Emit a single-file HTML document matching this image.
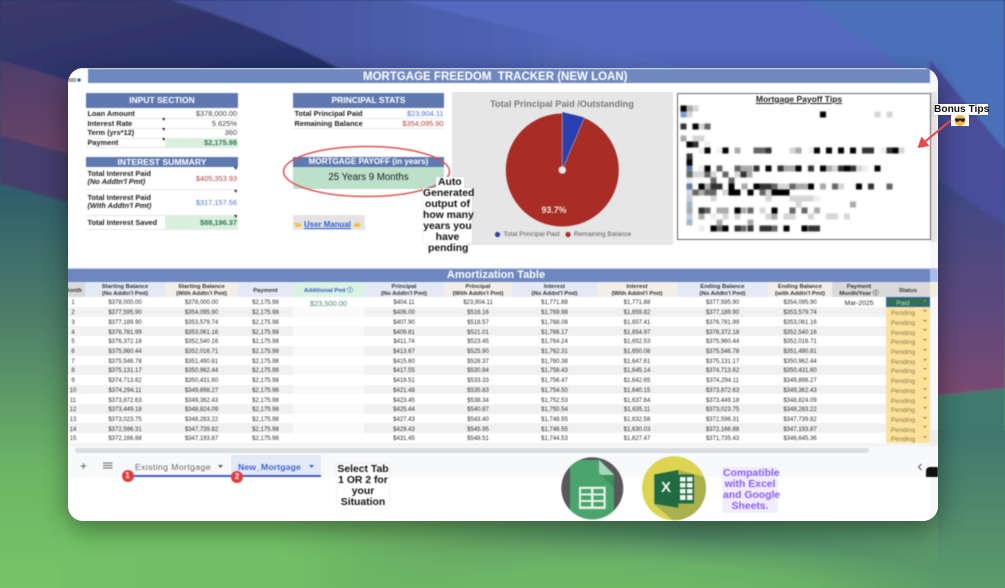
<!DOCTYPE html>
<html><head><meta charset="utf-8"><title>Mortgage Freedom Tracker</title>
<style>
*{box-sizing:border-box;margin:0;padding:0}
html,body{width:1005px;height:588px;overflow:hidden;background:#4a6a8a;font-family:"Liberation Sans",sans-serif}
.bg{position:absolute;left:0;top:0;display:block}
.win{position:absolute;left:67.5px;top:67.5px;width:870px;height:453px;background:#fff;border-radius:15px;box-shadow:0 8px 26px rgba(0,0,0,.42);overflow:hidden}
.c{position:absolute;left:-67.5px;top:-67.5px;width:1005px;height:588px;filter:blur(.4px)}
.a{position:absolute;white-space:nowrap}
.hd{background:#5f79b0;color:#fff;font-weight:bold;text-align:center;font-size:8.5px}
.l{font-size:7.4px;font-weight:bold;color:#222}
.v{font-size:7.4px;color:#444;text-align:right}
.hl{height:.7px;background:#e8e8e8}
.lab{position:absolute;background:#fff;font-weight:bold;color:#111;font-size:10.4px;line-height:11px;text-align:center;box-shadow:0 0 2px rgba(0,0,0,.12);white-space:nowrap}
.r{display:grid;grid-template-columns:18px 80px 73px 55px 71px 80px 68px 85px 80px 91px 64px 54px 44px;height:9.71px;line-height:9.71px;font-size:6px;color:#2c2c2c;text-align:center}
.r>span{white-space:nowrap;overflow:hidden;padding-top:2.2px}
.r:nth-child(even){background:#f1f1f1}
.r>span:first-child{padding-right:6px}
.r>span:nth-child(5){background:#fff}
.r:nth-child(even)>span:nth-child(5){background:#fafafa}
.r>span:nth-child(13){background:#fce19b;color:#8d7c4c;font-size:6.6px;padding-right:10px;position:relative}
.r>span:nth-child(13):after{content:"";position:absolute;right:3px;top:3px;border:2px solid transparent;border-top:2.5px solid #a58a3a;border-bottom:0}
.th{position:absolute;top:281.7px;left:67px;height:15.6px;display:grid;grid-template-columns:18px 80px 73px 55px 71px 80px 68px 85px 80px 91px 64px 54px 44px;font-size:5.9px;font-weight:bold;color:#333;text-align:center;line-height:7.4px}
.th>div{display:flex;align-items:center;justify-content:center;overflow:hidden;white-space:nowrap;background:#e3eaf5;padding-top:3.5px}
.th>div.t{background:#f3efe8}
.th>div.g{background:#d9d9d9}
</style></head><body>
<svg class="bg" width="1005" height="588" viewBox="0 0 1005 588">
<defs>
<linearGradient id="v" x1="0" y1="0" x2="0" y2="1"><stop offset="0" stop-color="#1f3770"/><stop offset=".3" stop-color="#2d5a6c"/><stop offset=".55" stop-color="#4e8069"/><stop offset=".8" stop-color="#6db565"/><stop offset="1" stop-color="#75c566"/></linearGradient>
<linearGradient id="tl" x1="0" y1="0" x2="0" y2="1"><stop offset="0" stop-color="#3b3a6c"/><stop offset="1" stop-color="#6a4468"/></linearGradient>
<linearGradient id="dk" x1="0" y1="0" x2="1" y2="1"><stop offset="0" stop-color="#3e3a6c"/><stop offset="1" stop-color="#20316c"/></linearGradient>
<linearGradient id="tb" x1="0" y1="0" x2="1" y2="0"><stop offset="0" stop-color="#444f94"/><stop offset=".6" stop-color="#4f62b4"/><stop offset="1" stop-color="#5b74c8"/></linearGradient>
<linearGradient id="rr" x1="0" y1="0" x2="0" y2="1"><stop offset="0" stop-color="#3c4986"/><stop offset=".6" stop-color="#5d4a7c"/><stop offset="1" stop-color="#7d4a70"/></linearGradient>
<linearGradient id="gb" gradientUnits="userSpaceOnUse" x1="0" y1="0" x2="938" y2="0"><stop offset="0" stop-color="#72c166"/><stop offset=".3" stop-color="#72c066"/><stop offset=".47" stop-color="#68aa64"/><stop offset=".75" stop-color="#508a66"/><stop offset="1" stop-color="#5a986a"/></linearGradient>
<linearGradient id="gr" x1="0" y1="0" x2="0" y2="1"><stop offset="0" stop-color="#41766e"/><stop offset="1" stop-color="#5c9c6a"/></linearGradient>
<radialGradient id="gl" gradientUnits="userSpaceOnUse" cx="0" cy="0" r="1" gradientTransform="translate(640 600) scale(330 65)"><stop offset="0" stop-color="#72bc66"/><stop offset=".55" stop-color="#72bc66" stop-opacity=".75"/><stop offset="1" stop-color="#72bc66" stop-opacity="0"/></radialGradient>
<filter id="b"><feGaussianBlur stdDeviation="1"/></filter>
</defs>
<rect width="1005" height="588" fill="url(#v)"/>
<g filter="url(#b)">
<polygon points="0,0 400,0 400,70 67,202 0,183" fill="#453c6c"/>
<polygon points="0,0 400,0 400,80 67,153 0,135" fill="url(#tl)"/>
<path d="M0,0 L170,0 Q270,30 345,72 L67,80 L0,60Z" fill="url(#dk)"/>
<path d="M170,0 L700,0 L720,72 L345,72 Q270,30 170,0Z" fill="url(#tb)"/>
<polygon points="400,0 1005,0 1005,235 938,90 700,72" fill="#5469c0"/>
<polygon points="805,0 1005,0 1005,240 938,90" fill="#4b6fba"/>
<polygon points="930,60 1005,150 1005,240 930,170" fill="#4a4e9a"/>
<polygon points="930,175 1005,225 1005,400 930,400" fill="url(#rr)"/>
<path d="M930,396 Q970,392 1005,388 L1005,440 L930,440Z" fill="#3f7a6d"/>
</g>
<rect x="930" y="430" width="75" height="158" fill="url(#gr)"/>
<rect x="60" y="515" width="878" height="73" fill="url(#gb)"/>
<rect x="300" y="530" width="638" height="58" fill="url(#gl)"/>
</svg>
<div class="win"><div class="c">
<!-- title -->
<div class="a" style="left:67px;top:67px;width:871px;height:2px;background:#ddd"></div>
<div class="a" style="left:87.5px;top:69.3px;width:842.5px;height:14px;background:#7088c0;color:#fff;font-weight:bold;font-size:11.5px;line-height:14px;text-align:center;padding-right:27px;padding-top:1.2px">MORTGAGE FREEDOM&nbsp; TRACKER (NEW LOAN)</div>
<svg class="a" style="left:68px;top:77px" width="16" height="7"><g fill="#555"><rect x="0" y="1.5" width="8" height="1"/><rect x="0" y="3.5" width="8" height="1"/></g><circle cx="11" cy="3" r="1.8" fill="#2a6a9a"/></svg>
<!-- right gutter -->
<div class="a" style="left:930px;top:69px;width:8px;height:452px;background:#f8f8f8"></div>
<div class="a" style="left:931px;top:92px;width:6px;height:150px;background:#e4e4e4"></div>
<div class="a" style="left:930px;top:268px;width:8px;height:14px;background:#a9bce6"></div>
<div class="a" style="left:930px;top:282px;width:8px;height:15px;background:#f0ece0"></div>
<div class="a" style="left:930px;top:430px;width:8px;height:18px;background:#ececec"></div>
<!-- input -->
<div class="a hd" style="left:85.7px;top:93.3px;width:152.6px;height:15px;line-height:15px">INPUT SECTION</div>
<div class="a" style="left:165px;top:137.8px;width:73.3px;height:9.7px;background:#d9f0df"></div>
<div class="a l" style="left:87.5px;top:109px;line-height:9.7px">Loan Amount</div>
<div class="a v" style="left:165px;top:109px;width:72px;line-height:9.7px">$378,000.00</div>
<div class="a l" style="left:87.5px;top:118.5px;line-height:9.7px">Interest Rate</div>
<div class="a v" style="left:165px;top:118.5px;width:72px;line-height:9.7px">5.625%</div>
<div class="a l" style="left:87.5px;top:128.2px;line-height:9.7px">Term (yrs*12)</div>
<div class="a v" style="left:165px;top:128.2px;width:72px;line-height:9.7px">360</div>
<div class="a l" style="left:87.5px;top:137.9px;line-height:9.7px">Payment</div>
<div class="a v" style="left:165px;top:137.9px;width:72px;line-height:9.7px;color:#2f7a4e;font-weight:bold">$2,175.98</div>
<div class="a hl" style="left:85.7px;top:118px;width:152.6px"></div><div class="a hl" style="left:85.7px;top:127.8px;width:152.6px"></div><div class="a hl" style="left:85.7px;top:137.5px;width:152.6px"></div><div class="a hl" style="left:85.7px;top:147px;width:152.6px"></div>
<svg class="a" style="left:160px;top:117px" width="6" height="30"><path d="M2,1h3l-1,3zM2,11h3l-1,3zM2,21h3l-1,3z" fill="#222"/></svg>
<!-- interest summary -->
<div class="a hd" style="left:85.7px;top:156.7px;width:152.6px;height:10.7px;line-height:10.7px;font-size:8.6px">INTEREST SUMMARY</div>
<div class="a" style="left:165px;top:215px;width:73.3px;height:14.3px;background:#d9f0df"></div>
<div class="a l" style="left:87.5px;top:169.5px;line-height:8.8px">Total Interest Paid<br><i>(No Addtn'l Pmt)</i></div>
<div class="a v" style="left:165px;top:174px;width:72px;color:#b8403a">$405,353.93</div>
<div class="a l" style="left:87.5px;top:193.5px;line-height:8.8px">Total Interest Paid<br><i>(With Addtn'l Pmt)</i></div>
<div class="a v" style="left:165px;top:198px;width:72px;color:#4a72d8">$317,157.56</div>
<div class="a l" style="left:87.5px;top:218px">Total Interest Saved</div>
<div class="a v" style="left:165px;top:218px;width:72px;color:#2f7a4e;font-weight:bold">$88,196.37</div>
<div class="a hl" style="left:85.7px;top:189.3px;width:152.6px"></div><div class="a hl" style="left:85.7px;top:214.6px;width:152.6px"></div><div class="a hl" style="left:85.7px;top:229.3px;width:152.6px"></div>
<svg class="a" style="left:233px;top:166px" width="6" height="62"><path d="M1,1h3l-1,3zM1,24h3l-1,3zM1,49h3l-1,3z" fill="#222"/></svg>
<!-- principal -->
<div class="a hd" style="left:292.7px;top:93.3px;width:151.6px;height:15px;line-height:15px">PRINCIPAL STATS</div>
<div class="a l" style="left:294.5px;top:109px;line-height:9.7px">Total Principal Paid</div>
<div class="a v" style="left:370px;top:109px;width:73.5px;line-height:9.7px;color:#4a72d8">$23,904.11</div>
<div class="a l" style="left:294.5px;top:118.5px;line-height:9.7px">Remaining Balance</div>
<div class="a v" style="left:370px;top:118.5px;width:73.5px;line-height:9.7px;color:#b8403a">$354,095.90</div>
<div class="a hl" style="left:292.7px;top:118px;width:151.6px"></div><div class="a hl" style="left:292.7px;top:127.8px;width:151.6px"></div>
<!-- payoff -->
<div class="a hd" style="left:292.7px;top:156.7px;width:151.6px;height:10.7px;line-height:10.7px;font-size:8.1px">MORTGAGE PAYOFF (in years)</div>
<div class="a" style="left:292.7px;top:167.4px;width:151.6px;height:22px;background:#bce0ca;color:#222;font-size:9.7px;line-height:22px;text-align:center">25 Years 9 Months</div>
<!-- manual -->
<div class="a" style="left:292.7px;top:215px;width:72px;height:15px;background:#e4e4e4"></div>
<div class="a" style="left:304px;top:220px;font-size:7.9px;font-weight:bold;color:#2a5bd7;text-decoration:underline">User Manual</div>
<svg class="a" style="left:293px;top:220px" width="70" height="9"><path d="M1,3h5l2,1v3H3zM68,3h-5l-2,1v3h5z" fill="#f2c33c"/></svg>
<!-- chart -->
<div class="a" style="left:451.5px;top:92px;width:221px;height:153px;background:#e6e6e6"></div>
<div class="a" style="left:451.5px;top:97.5px;width:221px;text-align:center;font-size:9.2px;line-height:12px;font-weight:bold;color:#7a7a7a">Total Principal Paid /Outstanding</div>
<svg class="a" style="left:451.5px;top:92px" width="221" height="153" viewBox="451.5 92 221 153">
<circle cx="561.8" cy="170" r="56.5" fill="#a92c25"/>
<path d="M561.8,170 L561.8,112 L583.8,117.6Z" fill="#2a3fb0"/>
<path d="M561.8,170 L561.8,113.5M561.8,170 L583.8,118" stroke="#d8d8d8" stroke-width=".5" fill="none"/>
<circle cx="561.8" cy="170" r="3.8" fill="#e6e6e6"/>
<circle cx="497" cy="234.5" r="2.6" fill="#2a3fb0"/><circle cx="567.5" cy="234.5" r="2.6" fill="#a92c25"/>
</svg>
<div class="a" style="left:540px;top:204.5px;width:28px;text-align:center;color:#f4e3e0;font-size:8.8px;line-height:10px;font-weight:bold">93.7%</div>
<div class="a" style="left:503.5px;top:230.5px;font-size:6.6px;line-height:8px;color:#5a5a5a">Total Principal Paid</div>
<div class="a" style="left:574px;top:230.5px;font-size:6.6px;line-height:8px;color:#5a5a5a">Remaining Balance</div>
<!-- tips -->
<div class="a" style="left:676.5px;top:92.5px;width:254px;height:147px;background:#fff;border:1px solid #666"></div>
<div class="a" style="left:672px;top:94px;width:254px;text-align:center;font-size:8.5px;line-height:10px;font-weight:bold;color:#222;text-decoration:underline">Mortgage Payoff Tips</div>
<svg class="a" style="left:670px;top:90px;filter:blur(.5px)" width="265" height="155" viewBox="0 0 795 465" shape-rendering="crispEdges">
<g>
<path fill="#000" d="M32 46h18v18h-18zM450 64h18v18h-18zM68 101h18v18h-18zM50 155h18v18h-18zM104 173h18v18h-18zM158 173h18v18h-18zM432 173h18v18h-18zM468 173h18v18h-18zM504 173h18v18h-18zM540 173h18v18h-18zM668 173h18v18h-18zM50 209h18v18h-18zM104 227h18v18h-18zM286 227h18v18h-18zM376 227h18v18h-18zM450 227h18v18h-18zM522 227h18v18h-18zM614 227h18v18h-18zM86 281h18v18h-18zM140 281h18v18h-18zM176 281h18v18h-18zM250 281h18v18h-18zM414 281h18v18h-18zM558 281h18v18h-18zM176 299h36v18h-36zM232 299h18v18h-18zM304 299h54v18h-54zM194 353h18v18h-18zM304 353h18v18h-18zM122 407h18v18h-18zM158 407h18v18h-18zM340 407h18v18h-18zM394 407h18v18h-18z"/>
<path fill="#333" d="M32 101h18v18h-18zM68 155h18v18h-18zM286 173h18v18h-18zM576 173h36v18h-36zM650 173h18v18h-18zM50 191h18v18h-18zM250 227h18v18h-18zM322 227h18v18h-18zM414 227h18v18h-18zM504 227h18v18h-18zM540 227h18v18h-18zM212 245h18v18h-18zM122 281h36v18h-36zM268 281h36v18h-36zM594 281h18v18h-18zM86 353h18v18h-18zM194 407h18v18h-18zM232 407h18v18h-18zM268 407h36v18h-36zM414 407h36v18h-36z"/>
<path fill="#666" d="M104 101h18v18h-18zM250 173h36v18h-36zM140 227h18v18h-18zM194 227h18v18h-18zM50 245h18v18h-18zM104 245h18v18h-18zM158 245h18v18h-18zM122 263h18v18h-18zM176 263h18v18h-18zM304 281h18v18h-18zM358 281h18v18h-18zM486 281h18v18h-18zM650 281h18v18h-18zM68 299h18v18h-18zM104 299h36v18h-36zM268 299h18v18h-18zM104 353h18v18h-18zM232 353h18v18h-18zM358 353h18v18h-18zM394 353h18v18h-18zM140 407h18v18h-18zM212 407h18v18h-18zM304 407h18v18h-18z"/>
<path fill="#aaa" d="M50 46h18v18h-18zM32 137h18v18h-18zM194 173h18v18h-18zM376 173h18v18h-18zM212 227h36v18h-36zM340 227h36v18h-36zM468 227h18v18h-18zM230 245h18v18h-18zM104 281h18v18h-18zM214 281h18v18h-18zM376 281h36v18h-36zM450 281h18v18h-18zM86 299h18v18h-18zM540 335h18v18h-18zM50 353h18v18h-18zM140 353h36v18h-36zM212 353h18v18h-18zM432 353h18v18h-18zM86 371h18v18h-18zM304 371h18v18h-18zM140 389h18v18h-18zM232 389h18v18h-18z"/>
<path fill="#d6d6d6" d="M68 46h18v18h-18zM50 64h18v18h-18zM614 64h18v18h-18zM650 64h18v18h-18zM86 101h18v18h-18zM68 137h36v18h-36zM358 173h18v18h-18zM686 173h18v18h-18zM486 227h18v18h-18zM558 227h18v18h-18zM68 245h36v18h-36zM122 245h18v18h-18zM194 245h18v18h-18zM322 281h36v18h-36zM504 281h18v18h-18zM50 299h18v18h-18zM158 299h18v18h-18zM286 299h18v18h-18zM122 317h18v18h-18zM286 317h18v18h-18zM358 317h72v18h-72zM376 335h18v18h-18zM268 353h18v18h-18zM414 371h18v18h-18zM468 371h36v18h-36zM522 371h18v18h-18zM158 371h18v18h-18zM194 371h18v18h-18zM286 371h18v18h-18zM340 371h36v18h-36z"/>
<path fill="#efefef" d="M104 155h18v18h-18zM86 173h18v18h-18zM140 173h18v18h-18zM414 173h18v18h-18zM632 173h18v18h-18zM86 227h18v18h-18zM576 227h18v18h-18zM122 371h18v18h-18zM86 407h18v18h-18zM432 317h18v18h-18z"/>
<path fill="#7aa0cc" d="M32 64h18v18h-18z"/>
<path fill="#5f7fa8" d="M50 227h18v18h-18zM50 281h18v18h-18z"/>
<path fill="#bcd0e5" d="M50 317h18v18h-18zM50 371h18v18h-18z"/>
<path fill="#a5b5c8" d="M50 335h18v18h-18zM50 389h18v18h-18z"/>
<path fill="#e5ecf5" d="M50 263h18v18h-18z"/>
</g>
</svg>
<!-- amort -->
<div class="a" style="left:67px;top:267.5px;width:871px;height:1px;background:#c5cee6"></div>
<div class="a" style="left:67px;top:268.5px;width:863px;height:13.2px;background:#6f87c0;color:#fff;font-weight:bold;font-size:11px;line-height:13.2px;text-align:center;padding-top:.8px;padding-right:5px">Amortization Table</div>
<div class="th">
<div class="g" style="justify-content:flex-end;padding-right:3.3px"><span>Month</span></div>
<div>Starting Balance<br>(No Addtn'l Pmt)</div>
<div class="t">Starting Balance<br>(With Addtn'l Pmt)</div>
<div>Payment</div>
<div style="background:#d9f2e2;color:#3358c8">Additional Pmt ⓘ</div>
<div>Principal<br>(No Addtn'l Pmt)</div>
<div class="t">Principal<br>(With Addtn'l Pmt)</div>
<div>Interest<br>(No Addnt'l Pmt)</div>
<div class="t">Interest<br>(With Addnt'l Pmt)</div>
<div>Ending Balance<br>(No Addtn'l Pmt)</div>
<div class="t">Ending Balance<br>(with Addtn'l Pmt)</div>
<div class="g">Payment<br>Month/Year ⓘ</div>
<div class="g">Status</div>
</div>
<div class="a" style="left:67px;top:297.3px;width:863px;white-space:normal">
<div class="r"><span>1</span><span>$378,000.00</span><span>$378,000.00</span><span>$2,175.98</span><span style="color:#3d8a6a;font-size:7.4px">$23,500.00</span><span>$404.11</span><span>$23,904.11</span><span>$1,771.88</span><span>$1,771.88</span><span>$377,595.90</span><span>$354,095.90</span><span style="font-size:6.8px">Mar-2025</span><span style="background:#2f7050;color:#bfe0bf">Paid</span></div>
<div class="r"><span>2</span><span>$377,595.90</span><span>$354,095.90</span><span>$2,175.98</span><span></span><span>$406.00</span><span>$516.16</span><span>$1,769.98</span><span>$1,659.82</span><span>$377,189.90</span><span>$353,579.74</span><span></span><span>Pending</span></div>
<div class="r"><span>3</span><span>$377,189.90</span><span>$353,579.74</span><span>$2,175.98</span><span></span><span>$407.90</span><span>$518.57</span><span>$1,768.08</span><span>$1,657.41</span><span>$376,781.99</span><span>$353,061.16</span><span></span><span>Pending</span></div>
<div class="r"><span>4</span><span>$376,781.99</span><span>$353,061.16</span><span>$2,175.98</span><span></span><span>$409.81</span><span>$521.01</span><span>$1,766.17</span><span>$1,654.97</span><span>$376,372.18</span><span>$352,540.16</span><span></span><span>Pending</span></div>
<div class="r"><span>5</span><span>$376,372.18</span><span>$352,540.16</span><span>$2,175.98</span><span></span><span>$411.74</span><span>$523.45</span><span>$1,764.24</span><span>$1,652.53</span><span>$375,960.44</span><span>$352,016.71</span><span></span><span>Pending</span></div>
<div class="r"><span>6</span><span>$375,960.44</span><span>$352,016.71</span><span>$2,175.98</span><span></span><span>$413.67</span><span>$525.90</span><span>$1,762.31</span><span>$1,650.08</span><span>$375,546.78</span><span>$351,490.81</span><span></span><span>Pending</span></div>
<div class="r"><span>7</span><span>$375,546.78</span><span>$351,490.81</span><span>$2,175.98</span><span></span><span>$415.60</span><span>$528.37</span><span>$1,760.38</span><span>$1,647.61</span><span>$375,131.17</span><span>$350,962.44</span><span></span><span>Pending</span></div>
<div class="r"><span>8</span><span>$375,131.17</span><span>$350,962.44</span><span>$2,175.98</span><span></span><span>$417.55</span><span>$530.84</span><span>$1,758.43</span><span>$1,645.14</span><span>$374,713.62</span><span>$350,431.60</span><span></span><span>Pending</span></div>
<div class="r"><span>9</span><span>$374,713.62</span><span>$350,431.60</span><span>$2,175.98</span><span></span><span>$419.51</span><span>$533.33</span><span>$1,756.47</span><span>$1,642.65</span><span>$374,294.11</span><span>$349,898.27</span><span></span><span>Pending</span></div>
<div class="r"><span>10</span><span>$374,294.11</span><span>$349,898.27</span><span>$2,175.98</span><span></span><span>$421.48</span><span>$535.83</span><span>$1,754.50</span><span>$1,640.15</span><span>$373,872.63</span><span>$349,362.43</span><span></span><span>Pending</span></div>
<div class="r"><span>11</span><span>$373,872.63</span><span>$349,362.43</span><span>$2,175.98</span><span></span><span>$423.45</span><span>$538.34</span><span>$1,752.53</span><span>$1,637.64</span><span>$373,449.18</span><span>$348,824.09</span><span></span><span>Pending</span></div>
<div class="r"><span>12</span><span>$373,449.18</span><span>$348,824.09</span><span>$2,175.98</span><span></span><span>$425.44</span><span>$540.87</span><span>$1,750.54</span><span>$1,635.11</span><span>$373,023.75</span><span>$348,283.22</span><span></span><span>Pending</span></div>
<div class="r"><span>13</span><span>$373,023.75</span><span>$348,283.22</span><span>$2,175.98</span><span></span><span>$427.43</span><span>$543.40</span><span>$1,748.55</span><span>$1,632.58</span><span>$372,596.31</span><span>$347,739.82</span><span></span><span>Pending</span></div>
<div class="r"><span>14</span><span>$372,596.31</span><span>$347,739.82</span><span>$2,175.98</span><span></span><span>$429.43</span><span>$545.95</span><span>$1,746.55</span><span>$1,630.03</span><span>$372,166.88</span><span>$347,193.87</span><span></span><span>Pending</span></div>
<div class="r"><span>15</span><span>$372,166.88</span><span>$347,193.87</span><span>$2,175.98</span><span></span><span>$431.45</span><span>$548.51</span><span>$1,744.53</span><span>$1,627.47</span><span>$371,735.43</span><span>$346,645.36</span><span></span><span>Pending</span></div>
</div>
<div class="a" style="left:885.5px;top:297px;width:44.5px;height:10px;border:1px solid #3a62d0"></div>
<!-- scroll -->
<div class="a" style="left:67px;top:443px;width:863px;height:3px;background:#f3f3f3"></div>
<div class="a" style="left:67px;top:446px;width:871px;height:9px;background:#f8f9fa"></div>
<div class="a" style="left:75px;top:447.5px;width:794px;height:5.5px;border-radius:3px;background:#dadce0"></div>
<!-- tabs -->
<div class="a" style="left:67px;top:455px;width:871px;height:22px;background:#f8f9fa"></div>
<div class="a" style="left:231px;top:455px;width:90px;height:22px;background:#e3e9f7"></div>
<div class="a" style="left:133px;top:475px;width:188px;height:2px;background:#3f5bc4"></div>
<div class="a" style="left:80px;top:459.5px;font-size:12px;line-height:13px;color:#555">+</div>
<svg class="a" style="left:103px;top:462px" width="10" height="8"><path d="M0,1h9.5M0,3.5h9.5M0,6h9.5" stroke="#666" stroke-width="1"/></svg>
<div class="a" style="left:135px;top:461.5px;font-size:8.6px;line-height:11px;letter-spacing:.42px;color:#666">Existing Mortgage</div>
<svg class="a" style="left:218px;top:465px" width="6" height="4"><path d="M0,0h5l-2.5,3z" fill="#555"/></svg>
<div class="a" style="left:238px;top:461.5px;font-size:8.6px;line-height:11px;font-weight:bold;letter-spacing:.15px;color:#3f63d8">New_Mortgage</div>
<svg class="a" style="left:309px;top:465px" width="6" height="4"><path d="M0,0h5l-2.5,3z" fill="#3f63d8"/></svg>
<div class="a" style="left:121.5px;top:469.5px;width:12px;height:12px;border-radius:50%;background:#e23b3b;color:#fff;font-size:8px;font-weight:bold;line-height:12px;text-align:center">1</div>
<div class="a" style="left:231px;top:471px;width:12px;height:12px;border-radius:50%;background:#e23b3b;color:#fff;font-size:8px;font-weight:bold;line-height:12px;text-align:center">2</div>
<svg class="a" style="left:917px;top:463px" width="6" height="8"><path d="M4.5,1L1.5,4L4.5,7" stroke="#555" fill="none"/></svg>
<div class="a" style="left:926px;top:467px;width:12px;height:10px;background:#111;border-radius:4px 0 0 0"></div>
<!-- ellipse (behind the labels) -->
<svg class="a" style="left:0;top:0" width="1005" height="588"><ellipse cx="366.5" cy="171.5" rx="83" ry="25" fill="none" stroke="#e05050" stroke-width="1.5"/></svg>
<!-- labels -->
<div class="lab" style="left:436px;top:177px;padding:0 2px;line-height:11px">Auto</div>
<div class="lab" style="left:423px;top:188px;width:49px">Generated<br>output of<br>how many<br>years you<br>have</div>
<div class="lab" style="left:428px;top:243px;width:39px">pending</div>
<div class="lab" style="left:337px;top:463.5px;width:52px">Select Tab<br>1 OR 2 for<br>your<br>Situation</div>
<div class="lab" style="left:723px;top:467.5px;width:54px;color:#8b5cf6;background:#f2edfb">Compatible<br>with Excel<br>and Google<br>Sheets.</div>
<!-- excel/sheets icons -->
<svg class="a" style="left:0;top:0" width="1005" height="588">
<defs><clipPath id="c1"><circle cx="592.3" cy="488.3" r="31"/></clipPath><clipPath id="c2"><circle cx="674" cy="488.3" r="32"/></clipPath></defs>
<circle cx="592.3" cy="488.3" r="31" fill="#5c575c"/>
<g clip-path="url(#c1)">
<path d="M574,460H600L614,474V525H570V464Q570,460 574,460Z" fill="#4aa56c"/>
<path d="M599,460L614,475H603Q599,475 599,471Z" fill="#a5d6b8"/>
<path d="M601,475L614,488V475Z" fill="#3f8f5d"/>
<rect x="579" y="486.7" width="26.7" height="22.3" fill="#e6f0e6"/>
<g fill="#4aa56c"><rect x="581" y="489" width="10" height="4.5"/><rect x="593.5" y="489" width="10" height="4.5"/><rect x="581" y="495.5" width="10" height="4.5"/><rect x="593.5" y="495.5" width="10" height="4.5"/><rect x="581" y="502" width="10" height="4.5"/><rect x="593.5" y="502" width="10" height="4.5"/></g>
</g>
<circle cx="674" cy="488.3" r="32" fill="#ddd451"/>
<g clip-path="url(#c2)">
<path d="M654,504L684,530L715,510V480L694,474L678,470Z" fill="#a9b04e"/>
<rect x="678" y="474.5" width="16" height="29" fill="#206b42"/>
<g fill="#f2f5ee"><rect x="680" y="477" width="5.5" height="4.5"/><rect x="687" y="477" width="5.5" height="4.5"/><rect x="680" y="483" width="5.5" height="4.5"/><rect x="687" y="483" width="5.5" height="4.5"/><rect x="680" y="489" width="5.5" height="4.5"/><rect x="687" y="489" width="5.5" height="4.5"/><rect x="680" y="495" width="5.5" height="5"/><rect x="687" y="495" width="5.5" height="5"/></g>
<path d="M654.3,474.5L678.3,470V507.7L654.3,503.7Z" fill="#206b42"/>
</g>
</svg>
<div class="a" style="left:659px;top:480px;width:14px;text-align:center;color:#f3f5ee;font-size:15px;line-height:16px;font-weight:bold">X</div>
</div></div>
<!-- parts overlapping the window edge -->
<div class="a" style="left:934px;top:104px;width:54px;background:#fff;font-weight:bold;color:#111;font-size:10.2px;line-height:11px;text-align:center;box-shadow:0 0 3px rgba(0,0,0,.2);filter:blur(.3px)">Bonus Tips</div>
<svg class="a" style="left:910px;top:100px;filter:blur(.3px)" width="70" height="55" viewBox="910 100 70 55">
<rect x="951" y="115" width="18" height="11" fill="#fff"/>
<circle cx="960" cy="120.5" r="5.5" fill="#f3b640"/>
<path d="M955,118.5h10v1.5l-1,1.7h-2.5l-1.5,-1.7l-1.5,1.7h-2.5l-1,-1.7z" fill="#222"/>
<path d="M950.5,120.5L924,142.5" stroke="#e8494a" stroke-width="2" fill="none"/>
<path d="M917.5,148L921.5,136.5L929.5,146Z" fill="#e8494a"/>
</svg>
</body></html>
